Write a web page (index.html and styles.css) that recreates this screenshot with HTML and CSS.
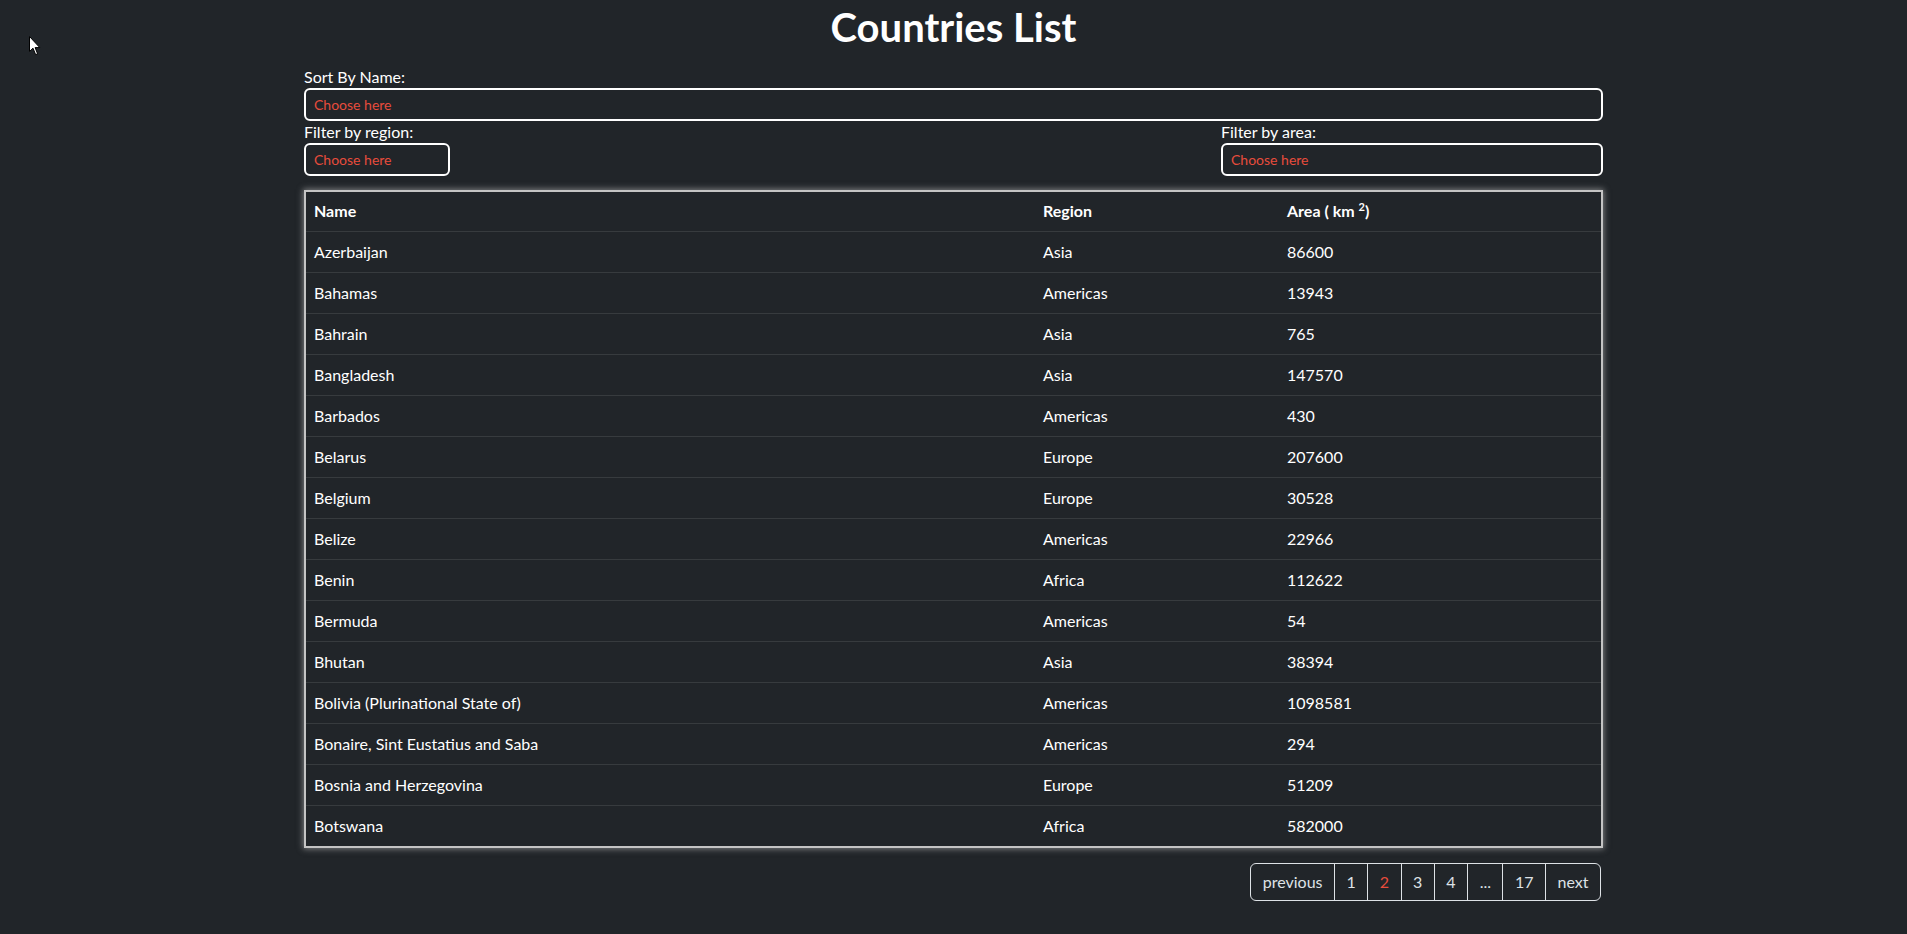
FILE: index.html
```html
<!DOCTYPE html>
<html lang="en">
<head>
<meta charset="utf-8">
<title>Countries List</title>
<link rel="stylesheet" href="styles.css">
</head>
<body>
<svg class="cursor" width="12" height="20" viewBox="0 0 12 20"><path d="M0.5 0.5 L0.5 15.5 L4 12.2 L6.6 18.6 L8.6 17.8 L6.1 11.6 L10.8 11.6 Z" fill="#fff" stroke="#000" stroke-width="1"/></svg>
<main class="container">
  <h1 class="title">Countries List</h1>
  <div class="field">
    <label class="label">Sort By Name:</label>
    <div class="select select-wide">Choose here</div>
  </div>
  <div class="filters">
    <div class="field">
      <label class="label">Filter by region:</label>
      <div class="select select-region">Choose here</div>
    </div>
    <div class="field field-area">
      <label class="label">Filter by area:</label>
      <div class="select">Choose here</div>
    </div>
  </div>
  <table class="countries">
    <colgroup><col class="c-name"><col class="c-region"><col></colgroup>
    <thead>
      <tr><th>Name</th><th>Region</th><th>Area ( km <sup>2</sup>)</th></tr>
    </thead>
    <tbody>
      <tr><td>Azerbaijan</td><td>Asia</td><td>86600</td></tr>
      <tr><td>Bahamas</td><td>Americas</td><td>13943</td></tr>
      <tr><td>Bahrain</td><td>Asia</td><td>765</td></tr>
      <tr><td>Bangladesh</td><td>Asia</td><td>147570</td></tr>
      <tr><td>Barbados</td><td>Americas</td><td>430</td></tr>
      <tr><td>Belarus</td><td>Europe</td><td>207600</td></tr>
      <tr><td>Belgium</td><td>Europe</td><td>30528</td></tr>
      <tr><td>Belize</td><td>Americas</td><td>22966</td></tr>
      <tr><td>Benin</td><td>Africa</td><td>112622</td></tr>
      <tr><td>Bermuda</td><td>Americas</td><td>54</td></tr>
      <tr><td>Bhutan</td><td>Asia</td><td>38394</td></tr>
      <tr><td>Bolivia (Plurinational State of)</td><td>Americas</td><td>1098581</td></tr>
      <tr><td>Bonaire, Sint Eustatius and Saba</td><td>Americas</td><td>294</td></tr>
      <tr><td>Bosnia and Herzegovina</td><td>Europe</td><td>51209</td></tr>
      <tr><td>Botswana</td><td>Africa</td><td>582000</td></tr>
    </tbody>
  </table>
  <nav class="pager">
    <ul class="pagination">
      <li class="page">previous</li>
      <li class="page">1</li>
      <li class="page active">2</li>
      <li class="page">3</li>
      <li class="page">4</li>
      <li class="page">...</li>
      <li class="page">17</li>
      <li class="page">next</li>
    </ul>
  </nav>
</main>
</body>
</html>
```
FILE: styles.css
```css
html, body {
  margin: 0;
  padding: 0;
  background: #212529;
  color: #fff;
  font-family: Lato, "Noto Sans", sans-serif;
  font-size: 16px;
  line-height: 1.5;
}

.cursor {
  position: absolute;
  left: 29px;
  top: 36px;
}

.container {
  width: 1299px;
  margin: 0 auto;
}

.title {
  margin: 3px 0 15px;
  text-align: center;
  font-size: 40px;
  line-height: 48px;
  font-weight: 700;
}

.field {
  display: flex;
  flex-direction: column;
}

.label {
  display: block;
  line-height: 22px;
  font-size: 16px;
}

.select {
  border: 2px solid #fff;
  border-radius: 6px;
  padding: 4px 8px;
  font-size: 14px;
  line-height: 21px;
  color: #e74c3c;
  background: #212529;
}

.select-region {
  width: 126px;
}

.filters {
  display: flex;
  justify-content: space-between;
  align-items: flex-start;
}

.field-area {
  width: 382px;
}

.countries {
  width: 100%;
  margin-top: 14px;
  border-collapse: collapse;
  table-layout: fixed;
  border: 2px solid #c4c4c4;
  box-shadow: 0 0 6px 1px rgba(200, 200, 200, 0.55);
}

.c-name { width: 730px; }
.c-region { width: 244px; }

.countries th,
.countries td {
  text-align: left;
  padding: 8px 8px;
  line-height: 24px;
  border-bottom: 1px solid #373b3e;
}

.countries tbody tr:last-child td {
  border-bottom: none;
}

.countries th {
  font-weight: 700;
  padding-top: 7px;
}

.countries sup {
  font-size: 11px;
  line-height: 0;
  vertical-align: 6px;
}

.pager {
  display: flex;
  justify-content: flex-end;
  margin-top: 15px;
  padding-right: 2px;
}

.pagination {
  display: flex;
  list-style: none;
  margin: 0;
  padding: 0;
}

.page {
  padding: 6px 11.5px;
  line-height: 24px;
  border: 1px solid #dee2e6;
  margin-left: -1px;
  color: #dee2e6;
}

.page:first-child {
  margin-left: 0;
  border-radius: 6px 0 0 6px;
}

.page:last-child {
  border-radius: 0 6px 6px 0;
}

.page.active {
  color: #e74c3c;
}
```
